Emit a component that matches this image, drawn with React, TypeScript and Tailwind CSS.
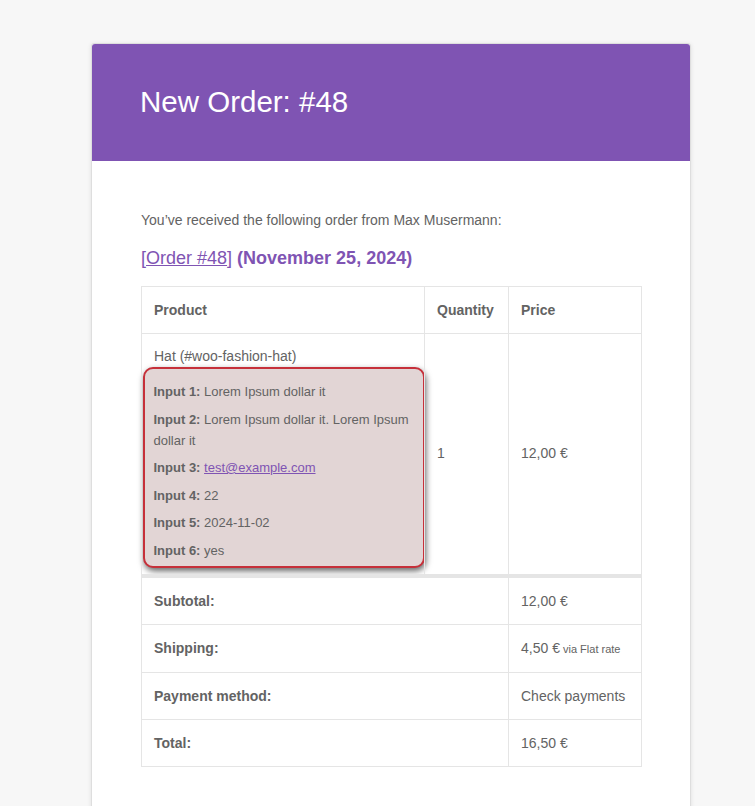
import React from 'react';

const meta = [
  { label: 'Input 1:', value: 'Lorem Ipsum dollar it' },
  { label: 'Input 2:', value: 'Lorem Ipsum dollar it. Lorem Ipsum dollar it' },
  { label: 'Input 3:', value: 'test@example.com', link: true },
  { label: 'Input 4:', value: '22' },
  { label: 'Input 5:', value: '2024-11-02' },
  { label: 'Input 6:', value: 'yes' },
];

const totals = [
  { label: 'Subtotal:', value: '12,00 €' },
  { label: 'Shipping:', value: '4,50 €', note: 'via Flat rate' },
  { label: 'Payment method:', value: 'Check payments' },
  { label: 'Total:', value: '16,50 €' },
];

const cell = "border border-[#e5e5e5] px-3 py-3 text-left align-middle";

export default function App() {
  return (
    <div
      className="min-h-screen bg-[#f7f7f7] pt-[43px] pl-[91px] text-[#636363] text-[14px] leading-[21px]"
      style={{ fontFamily: '"Liberation Sans", Arial, Helvetica, sans-serif' }}
    >
      <div className="w-[600px] min-h-[763px] bg-white border border-[#dedede] rounded-[3px] shadow-[0_1px_4px_rgba(0,0,0,0.1)]">
        {/* Header */}
        <div className="bg-[#7f54b3] rounded-t-[3px] px-12 pt-9 pb-[37px]">
          <h1 className="text-[29.5px] leading-[45px] font-light text-white -mt-[1px]">New Order: #48</h1>
        </div>

        {/* Body */}
        <div className="px-[49px] pt-[49px] pb-12">
          <p className="mb-4">You’ve received the following order from Max Musermann:</p>
          <h2 className="text-[18px] leading-[23px] font-bold text-[#7f54b3] mb-[16px] mt-[6px]">
            <span className="font-normal">[<a className="underline">Order #48</a>]</span> (November 25, 2024)
          </h2>

          <table className="w-[500px] border-collapse table-fixed">
            <colgroup>
              <col className="w-[283px]" />
              <col className="w-[84px]" />
              <col className="w-[133px]" />
            </colgroup>
            <thead>
              <tr>
                <th className={`${cell} font-bold leading-[22px]`}>Product</th>
                <th className={`${cell} font-bold leading-[22px]`}>Quantity</th>
                <th className={`${cell} font-bold leading-[22px]`}>Price</th>
              </tr>
            </thead>
            <tbody>
              <tr>
                <td className={`${cell} align-top`}>
                  <div>Hat (#woo-fashion-hat)</div>
                  <ul className="-ml-[11px] -mr-[13px] -mb-[6px] flex flex-col gap-[6.5px] rounded-[10px] border-[2.5px] border-[#c6303a] bg-[#e2d5d5] pl-[8.5px] pr-[10.5px] pt-[12px] pb-[5px] text-[13px] leading-[21px] shadow-[1px_3px_6px_rgba(0,0,0,0.6)]">
                    {meta.map((m) => (
                      <li key={m.label}>
                        <strong className="font-bold">{m.label}</strong>{' '}
                        {m.link ? (
                          <a className="underline text-[#7f54b3]">{m.value}</a>
                        ) : (
                          <span>{m.value}</span>
                        )}
                      </li>
                    ))}
                  </ul>
                </td>
                <td className={cell}>1</td>
                <td className={cell}>12,00 €</td>
              </tr>
            </tbody>
            <tfoot>
              {totals.map((t, i) => (
                <tr key={t.label}>
                  <th colSpan={2} className={`${cell} font-bold leading-[22px] ${i === 0 ? 'border-t-4' : ''}`}>
                    {t.label}
                  </th>
                  <td className={`${cell} leading-[22px] ${i === 0 ? 'border-t-4' : ''}`}>
                    {t.value}
                    {t.note && <small className="text-[11px]"> {t.note}</small>}
                  </td>
                </tr>
              ))}
            </tfoot>
          </table>
        </div>
      </div>
    </div>
  );
}
